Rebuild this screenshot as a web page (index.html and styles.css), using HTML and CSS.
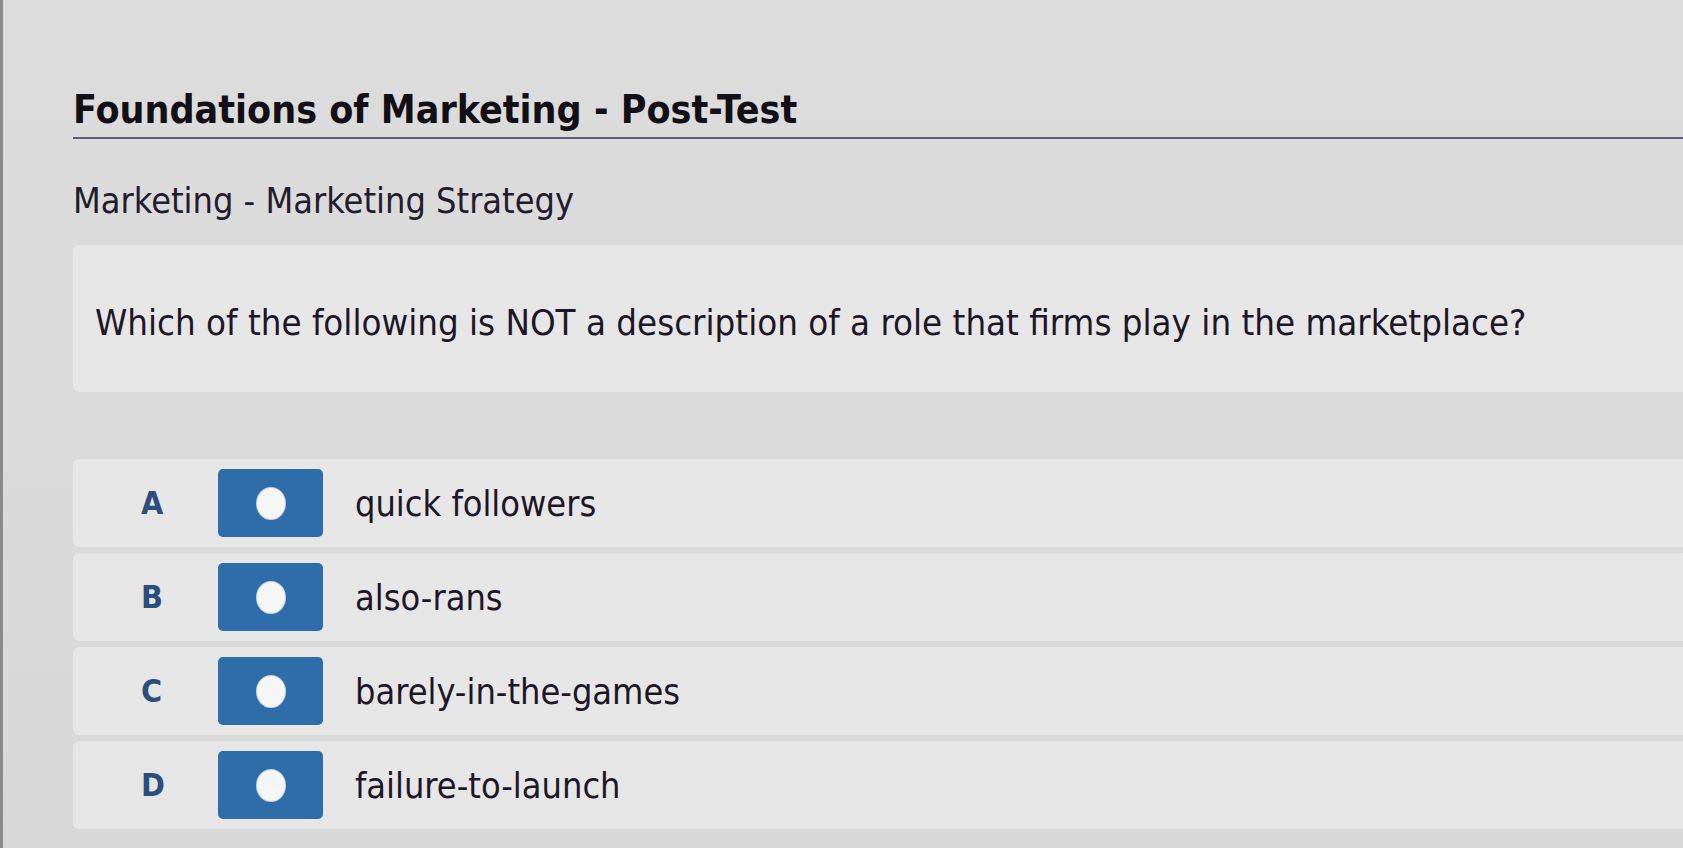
FILE: index.html
```html
<!DOCTYPE html>
<html>
<head>
<meta charset="utf-8">
<link rel="stylesheet" href="styles.css">
</head>
<body>
<div class="page">
  <header class="head">
    <h1 class="title">Foundations of Marketing - Post-Test</h1>
  </header>
  <div class="subtitle">Marketing - Marketing Strategy</div>
  <div class="question">Which of the following is NOT a description of a role that firms play in the marketplace?</div>
  <div class="options">
    <div class="option"><span class="letter">A</span><span class="radio"><span class="dot"></span></span><span class="text">quick followers</span></div>
    <div class="option"><span class="letter">B</span><span class="radio"><span class="dot"></span></span><span class="text">also-rans</span></div>
    <div class="option"><span class="letter">C</span><span class="radio"><span class="dot"></span></span><span class="text">barely-in-the-games</span></div>
    <div class="option"><span class="letter">D</span><span class="radio"><span class="dot"></span></span><span class="text">failure-to-launch</span></div>
  </div>
</div>
</body>
</html>
```
FILE: styles.css
```css
html, body {
  margin: 0;
  padding: 0;
}
body {
  width: 1683px;
  height: 848px;
  overflow: hidden;
  background: linear-gradient(180deg, #dcdcdc 0%, #d8d8d8 100%);
  font-family: "DejaVu Sans Condensed", "DejaVu Sans", sans-serif;
  font-stretch: condensed;
  color: #1c1726;
  border-left: 3px solid #8a8a8a;
  box-sizing: border-box;
}
.page {
  padding: 88px 0 0 70px;
}
.head {
  border-bottom: 2px solid #5e5d78;
  padding-bottom: 5px;
}
.title {
  margin: 0;
  font-size: 39px;
  font-weight: bold;
  line-height: 44px;
  color: #121016;
}
.subtitle {
  margin-top: 40px;
  font-size: 35.8px;
  line-height: 44px;
  color: #221c2c;
}
.question {
  margin-top: 22px;
  background: #e6e6e6;
  border-radius: 6px 0 0 6px;
  height: 147px;
  box-sizing: border-box;
  padding: 7px 0 0 22px;
  display: flex;
  align-items: center;
  font-size: 36.3px;
  color: #1d1626;
}
.options {
  margin-top: 67px;
  display: flex;
  flex-direction: column;
  gap: 6px;
}
.option {
  height: 88px;
  background: #e6e6e6;
  border-radius: 6px 0 0 6px;
  display: flex;
  align-items: center;
}
.letter {
  width: 145px;
  box-sizing: border-box;
  padding-left: 68px;
  font-weight: bold;
  font-size: 32px;
  color: #2b4e7c;
}
.radio {
  width: 105px;
  height: 68px;
  border-radius: 5px;
  background: #2f6daa;
  display: flex;
  align-items: center;
  justify-content: center;
}
.dot {
  width: 28px;
  height: 31px;
  border-radius: 50%;
  background: #f6f6f6;
  box-shadow: 0 0 0 1px #c9d3dc;
}
.text {
  margin-left: 32px;
  font-size: 35.8px;
  color: #1d1626;
}
```
